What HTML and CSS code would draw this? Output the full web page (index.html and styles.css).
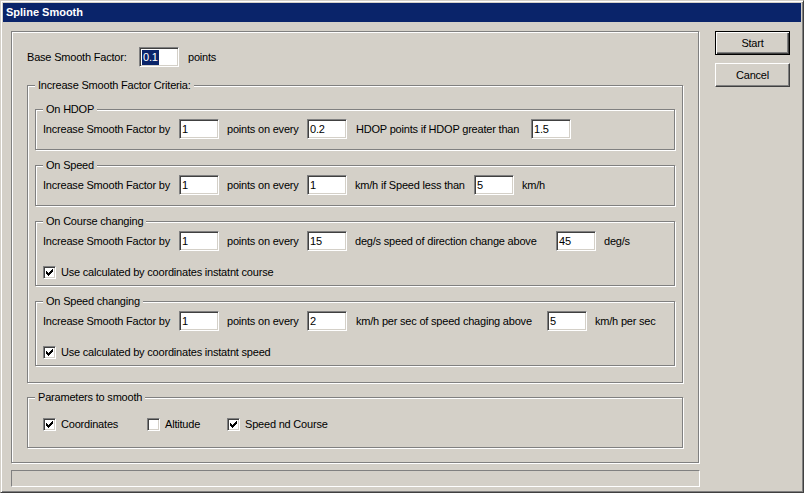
FILE: index.html
```html
<!DOCTYPE html>
<html>
<head>
<meta charset="utf-8">
<title>Spline Smooth</title>
<link rel="stylesheet" href="styles.css">
</head>
<body>
<div class="window">
  <div class="titlebar">Spline Smooth</div>
  <div class="client">
    <div class="main-col">
      <div class="mainframe">
        <div class="row base-row">
          <span class="lbl w-base">Base Smooth Factor:</span>
          <span class="edit"><span class="sel">0.1</span></span>
          <span class="lbl after-base">points</span>
        </div>

        <div class="group criteria">
          <div class="group-title">Increase Smooth Factor Criteria:</div>

          <div class="group sub first">
            <div class="group-title">On HDOP</div>
            <div class="row">
              <span class="lbl w-by">Increase Smooth Factor by</span>
              <span class="edit">1</span>
              <span class="lbl w-every">points on every</span>
              <span class="edit">0.2</span>
              <span class="lbl w-hdop">HDOP points if HDOP greater than</span>
              <span class="edit">1.5</span>
            </div>
          </div>

          <div class="group sub">
            <div class="group-title">On Speed</div>
            <div class="row">
              <span class="lbl w-by">Increase Smooth Factor by</span>
              <span class="edit">1</span>
              <span class="lbl w-every">points on every</span>
              <span class="edit">1</span>
              <span class="lbl w-speed">km/h if Speed less than</span>
              <span class="edit">5</span>
              <span class="lbl tail">km/h</span>
            </div>
          </div>

          <div class="group sub two-rows">
            <div class="group-title">On Course changing</div>
            <div class="row">
              <span class="lbl w-by">Increase Smooth Factor by</span>
              <span class="edit">1</span>
              <span class="lbl w-every">points on every</span>
              <span class="edit">15</span>
              <span class="lbl w-course">deg/s speed of direction change above</span>
              <span class="edit">45</span>
              <span class="lbl tail">deg/s</span>
            </div>
            <div class="check-row">
              <span class="cb"><svg width="9" height="9" viewBox="0 0 9 9"><path d="M1 3h1v3H1zM2 4h1v3H2zM3 5h1v3H3zM4 4h1v3H4zM5 3h1v3H5zM6 2h1v3H6zM7 1h1v3H7z" fill="#000"/></svg></span>
              <span class="cb-label">Use calculated by coordinates instatnt course</span>
            </div>
          </div>

          <div class="group sub two-rows">
            <div class="group-title">On Speed changing</div>
            <div class="row">
              <span class="lbl w-by">Increase Smooth Factor by</span>
              <span class="edit">1</span>
              <span class="lbl w-every">points on every</span>
              <span class="edit">2</span>
              <span class="lbl w-spch">km/h per sec of speed chaging above</span>
              <span class="edit">5</span>
              <span class="lbl tail">km/h per sec</span>
            </div>
            <div class="check-row">
              <span class="cb"><svg width="9" height="9" viewBox="0 0 9 9"><path d="M1 3h1v3H1zM2 4h1v3H2zM3 5h1v3H3zM4 4h1v3H4zM5 3h1v3H5zM6 2h1v3H6zM7 1h1v3H7z" fill="#000"/></svg></span>
              <span class="cb-label">Use calculated by coordinates instatnt speed</span>
            </div>
          </div>
        </div>

        <div class="group params">
          <div class="group-title">Parameters to smooth</div>
          <div class="check-row params-row">
            <span class="check-item w-coord">
              <span class="cb"><svg width="9" height="9" viewBox="0 0 9 9"><path d="M1 3h1v3H1zM2 4h1v3H2zM3 5h1v3H3zM4 4h1v3H4zM5 3h1v3H5zM6 2h1v3H6zM7 1h1v3H7z" fill="#000"/></svg></span>
              <span class="cb-label">Coordinates</span>
            </span>
            <span class="check-item w-alt">
              <span class="cb"></span>
              <span class="cb-label">Altitude</span>
            </span>
            <span class="check-item">
              <span class="cb"><svg width="9" height="9" viewBox="0 0 9 9"><path d="M1 3h1v3H1zM2 4h1v3H2zM3 5h1v3H3zM4 4h1v3H4zM5 3h1v3H5zM6 2h1v3H6zM7 1h1v3H7z" fill="#000"/></svg></span>
              <span class="cb-label">Speed nd Course</span>
            </span>
          </div>
        </div>
      </div>
      <div class="statusbar"></div>
    </div>
    <div class="btn-col">
      <button class="btn default">Start</button>
      <button class="btn">Cancel</button>
    </div>
  </div>
</div>
</body>
</html>
```

FILE: styles.css
```css
html, body {
  margin: 0;
  padding: 0;
  background: #d4d0c8;
  overflow: hidden;
}

body {
  font-family: "Liberation Sans", Arial, sans-serif;
  font-size: 11px;
  letter-spacing: -0.2px;
  color: #000;
}

.window {
  width: 804px;
  height: 493px;
  box-sizing: border-box;
  border: 1px solid;
  border-color: #d4d0c8 #404040 #404040 #d4d0c8;
  box-shadow: inset 1px 1px 0 #fff, inset -1px -1px 0 #808080;
  padding: 2px;
  background: #d4d0c8;
}

.titlebar {
  height: 19px;
  line-height: 19px;
  background: #0a246a;
  color: #fff;
  font-weight: bold;
  letter-spacing: 0;
  padding-left: 3px;
}

.client {
  display: flex;
  padding: 9px 0 0 8px;
  gap: 15px;
}

.main-col {
  width: 689px;
  display: flex;
  flex-direction: column;
}

.mainframe {
  width: 688px;
  height: 432px;
  box-sizing: border-box;
  border: 1px solid #808080;
  box-shadow: inset 1px 1px 0 #fff, 1px 1px 0 #fff;
  padding: 0 15px;
}

.statusbar {
  margin-top: 7px;
  height: 17px;
  box-sizing: border-box;
  border: 1px solid;
  border-color: #808080 #fff #fff #808080;
}

.row {
  display: flex;
  align-items: center;
  height: 20px;
  margin-top: 3px;
  white-space: nowrap;
}

.base-row {
  margin-top: 15px;
}

.lbl {
  display: block;
  flex: none;
  box-sizing: border-box;
}

.w-base { width: 112px; }
.after-base { padding-left: 9px; }
.w-by { width: 136px; }
.w-every { width: 88px; padding-left: 8px; }
.w-hdop { width: 184px; padding-left: 9px; }
.w-speed { width: 127px; padding-left: 8px; }
.w-course { width: 209px; padding-left: 8px; }
.w-spch { width: 200px; padding-left: 9px; }
.tail { padding-left: 8px; }

.edit {
  display: block;
  flex: none;
  width: 40px;
  height: 20px;
  box-sizing: border-box;
  background: #fff;
  border: 1px solid;
  border-color: #808080 #fff #fff #808080;
  box-shadow: inset 1px 1px 0 #404040, inset -1px -1px 0 #d4d0c8;
  padding: 3px 0 0 2px;
  line-height: 13px;
}

.sel {
  display: inline-block;
  background: #0a246a;
  color: #fff;
  padding: 1px;
  margin-top: -1px;
  line-height: 13px;
}

.group {
  border: 1px solid #808080;
  box-shadow: inset 1px 1px 0 #fff, 1px 1px 0 #fff;
  padding: 0 7px;
}

.group-title {
  width: fit-content;
  margin-top: -7px;
  height: 13px;
  line-height: 13px;
  padding: 0 3px;
  background: #d4d0c8;
  white-space: nowrap;
}

.criteria {
  margin-top: 18px;
  padding-bottom: 16px;
}

.sub {
  margin-top: 15px;
  padding-bottom: 10px;
}

.sub.first {
  margin-top: 17px;
}

.sub.two-rows {
  padding-bottom: 6px;
}

.check-row {
  display: flex;
  align-items: center;
  height: 13px;
  margin-top: 15px;
  white-space: nowrap;
}

.cb {
  display: block;
  flex: none;
  width: 13px;
  height: 13px;
  box-sizing: border-box;
  background: #fff;
  border: 1px solid;
  border-color: #808080 #fff #fff #808080;
  box-shadow: inset 1px 1px 0 #404040, inset -1px -1px 0 #d4d0c8;
  padding: 1px;
}

.cb svg {
  display: block;
}

.cb-label {
  margin-left: 5px;
  line-height: 13px;
}

.params {
  margin-top: 14px;
  padding-bottom: 16px;
}

.params-row {
  margin-top: 14px;
  padding-left: 8px;
}

.check-item {
  display: flex;
  align-items: center;
  flex: none;
}

.w-coord { width: 104px; }
.w-alt { width: 80px; }

.btn-col {
  display: flex;
  flex-direction: column;
  gap: 8px;
  width: 75px;
}

.btn {
  width: 75px;
  height: 24px;
  box-sizing: border-box;
  margin: 0;
  padding: 0;
  font-family: "Liberation Sans", Arial, sans-serif;
  font-size: 11px;
  letter-spacing: -0.2px;
  color: #000;
  background: #d4d0c8;
  border: 1px solid;
  border-color: #fff #404040 #404040 #fff;
  box-shadow: inset -1px -1px 0 #808080;
}

.btn.default {
  border-color: #000;
  box-shadow: inset 1px 1px 0 #fff, inset -1px -1px 0 #404040, inset -2px -2px 0 #808080;
}
```
